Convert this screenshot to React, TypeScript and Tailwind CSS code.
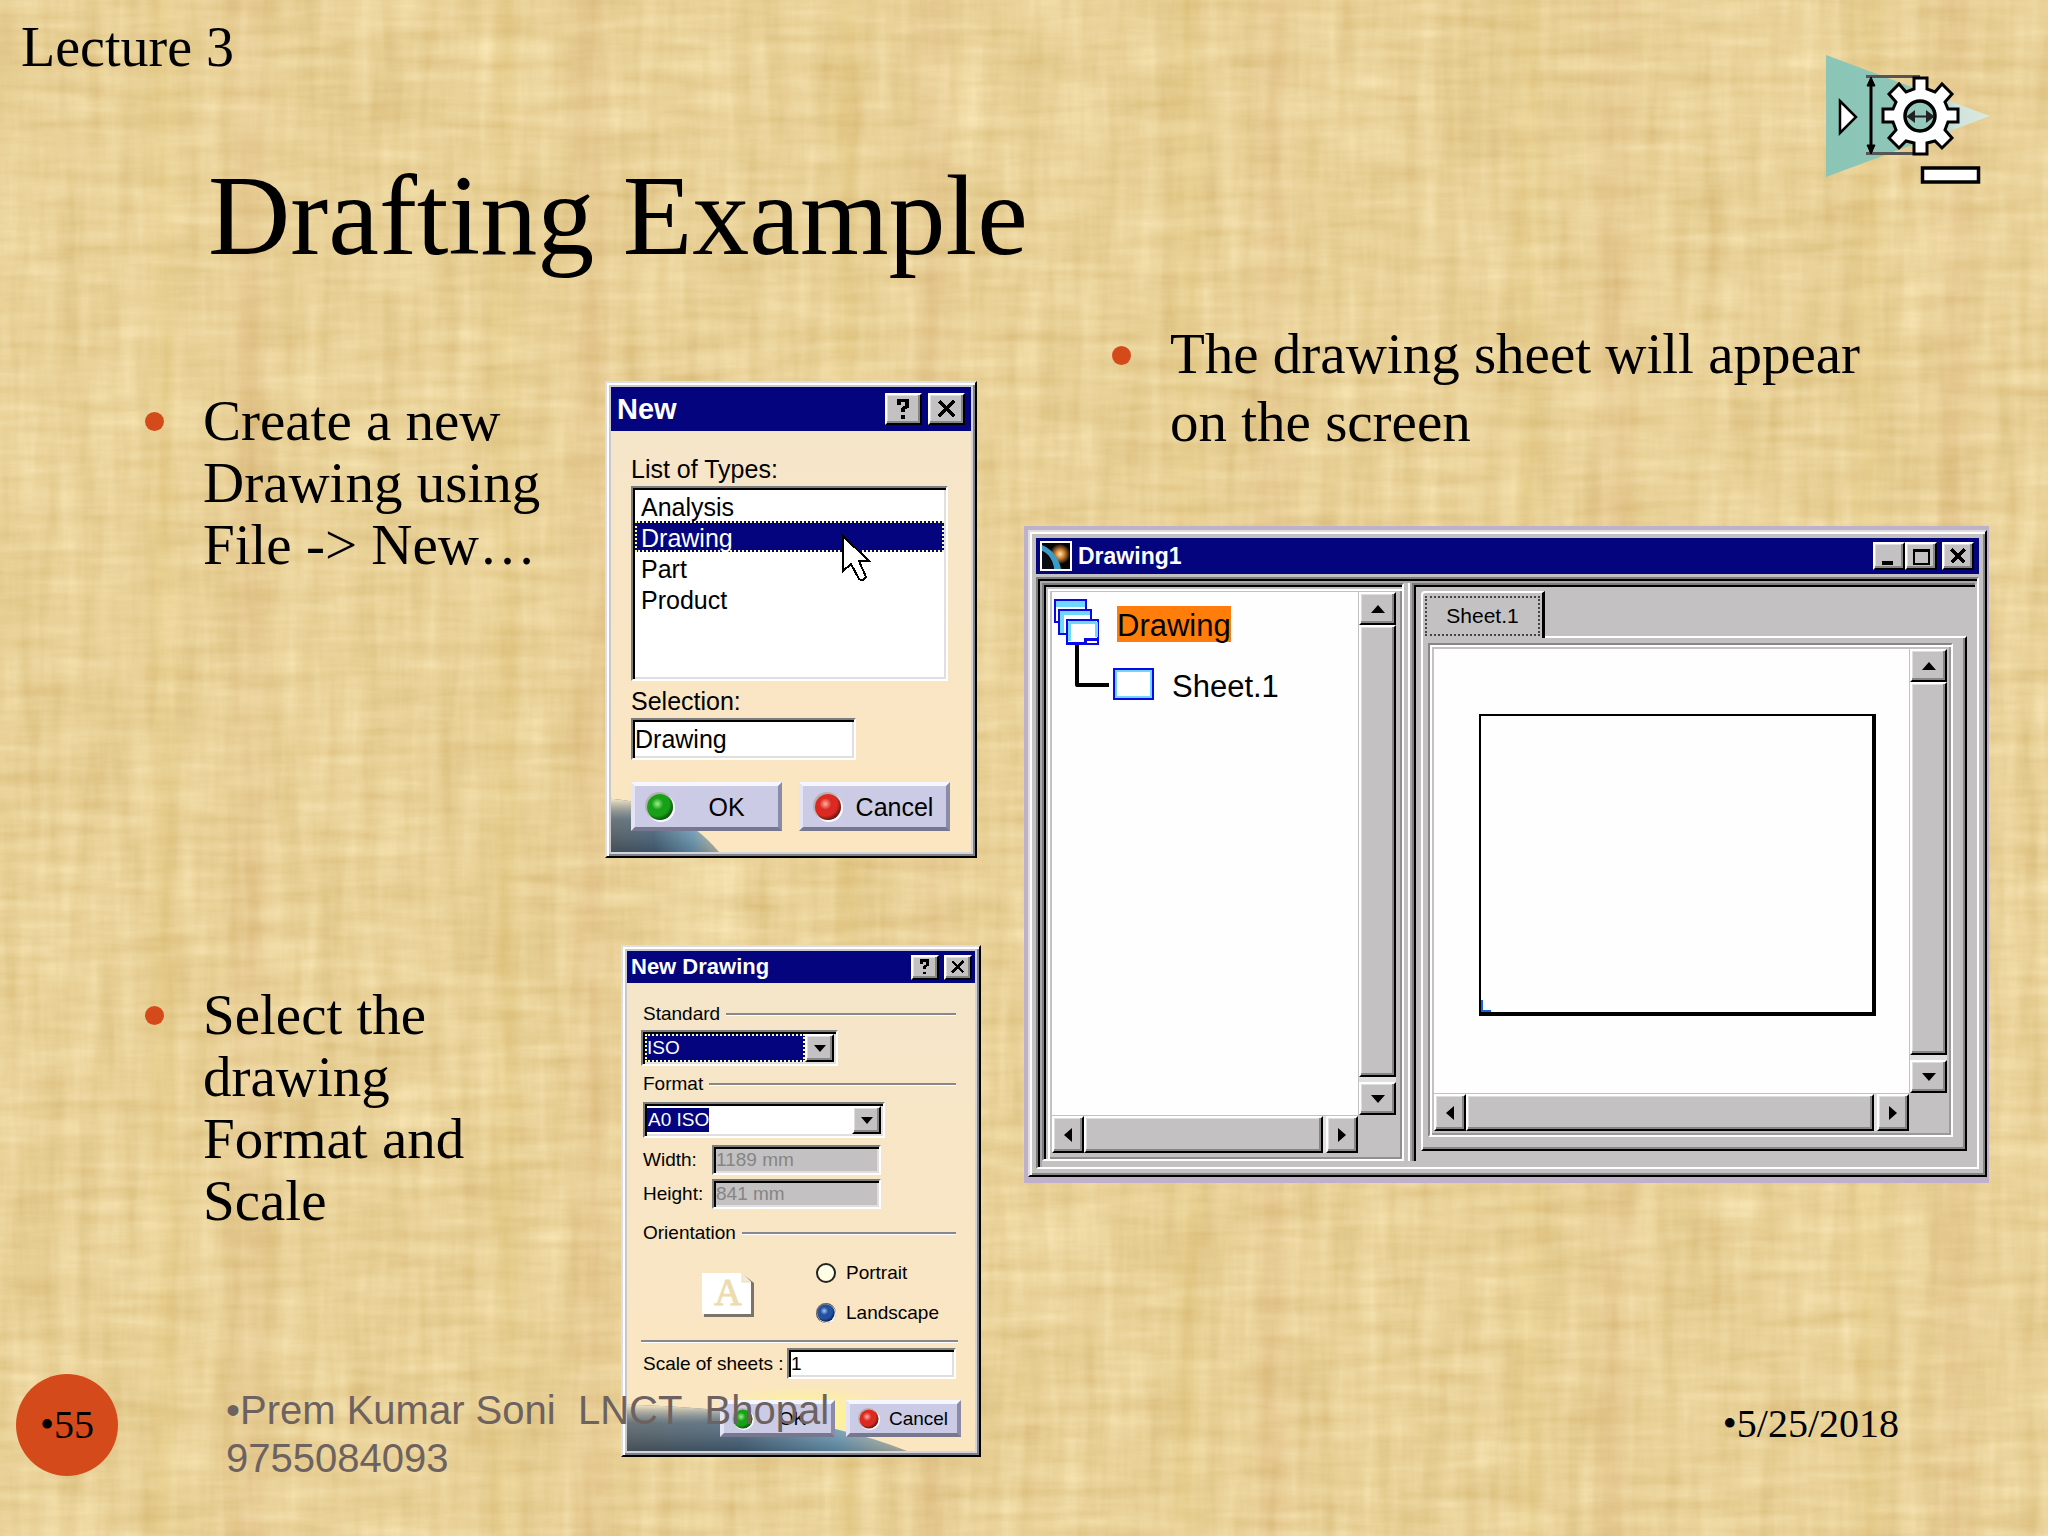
import { useState } from 'react';
import type { ReactNode } from 'react';
import clsx from 'clsx';

const serif = "font-['Liberation_Serif',serif]";
const sans = "font-['Liberation_Sans',sans-serif]";

const raised =
  'border-2 border-t-white border-l-white border-r-black border-b-black bg-[#c3c1c2] shadow-[inset_-2px_-2px_0_#868686,inset_1px_1px_0_#dedede]';
const sunken =
  'border-2 border-t-[#7d7d7d] border-l-[#7d7d7d] border-r-white border-b-white shadow-[inset_2px_2px_0_#000,inset_-2px_-2px_0_#e2dede]';
const dialogFrame =
  'relative shrink-0 border-t-2 border-l-2 border-r-2 border-b-2 border-t-[#dedee2] border-l-[#dedee2] border-r-black border-b-black shadow-[inset_2px_2px_0_#fff,inset_-2px_-2px_0_#808088,inset_4px_4px_0_#c8c8cc,inset_-4px_-4px_0_#d4d4dc] bg-[#fae6c3] bg-linear-to-b from-[#f5e5ca] to-[#fbe6c0]';

const fileTypes = ['Analysis', 'Drawing', 'Part', 'Product'];

function Papyrus() {
  return (
    <>
      <svg className="absolute inset-0 h-full w-full" aria-hidden="true">
        <filter id="papyrus" x="0" y="0" width="100%" height="100%" colorInterpolationFilters="sRGB">
          <feTurbulence type="fractalNoise" baseFrequency="0.009 0.07" numOctaves="4" seed="4" />
          <feColorMatrix values="1 0 0 0 0  1 0 0 0 0  1 0 0 0 0  0 0 0 0 1" result="weft" />
          <feTurbulence type="fractalNoise" baseFrequency="0.05 0.006" numOctaves="4" seed="9" />
          <feColorMatrix values="1 0 0 0 0  1 0 0 0 0  1 0 0 0 0  0 0 0 0 1" result="warp" />
          <feComposite in="weft" in2="warp" operator="arithmetic" k2="0.5" k3="0.5" />
          <feColorMatrix values="0.17 0 0 0 0.828  0.23 0 0 0 0.705  0.32 0 0 0 0.435  0 0 0 0 1" />
        </filter>
        <rect width="100%" height="100%" filter="url(#papyrus)" />
      </svg>
      <div className="absolute inset-0 bg-[repeating-linear-gradient(90deg,transparent_0px,transparent_140px,#d8b85a28_166px,transparent_184px,transparent_220px,#d09a6824_250px,transparent_280px,transparent_341px)]" />
    </>
  );
}

function GearLogo() {
  return (
    <svg viewBox="0 0 240 170" className="mt-[30px] mr-7 h-[170px] w-60 shrink-0" aria-hidden="true">
      <defs>
        <linearGradient id="cone" x1="0" x2="1">
          <stop offset="0" stopColor="#8ac5b6" />
          <stop offset="0.6" stopColor="#8fc7b9" />
          <stop offset="0.8" stopColor="#cfe3dc" />
          <stop offset="1" stopColor="#dde9df" />
        </linearGradient>
      </defs>
      <path d="M46 25 210 86 46 147Z" fill="url(#cone)" />
      <path d="M60 71 76 87 60 103Z" fill="#fff" stroke="#000" strokeWidth="2.500" />
      <path d="M86 46.5H140M86 123.5H140" stroke="#555" strokeWidth="3" />
      <path d="M91 50V122" stroke="#000" strokeWidth="3" />
      <path d="M91 47 95 56H87ZM91 124 95 115H87Z" stroke="#000" />
      <path
        d="M134 48H147V59L155 62L162 54L172 64L165 72L168 79H178V92H168L165 100L172 108L162 118L155 111L147 113V124H134V113L126 111L119 118L109 108L116 100L113 92H103V79H113L116 72L109 64L119 54L126 62L134 59Z"
        fill="#fff"
        stroke="#000"
        strokeWidth="3"
      />
      <circle cx="140" cy="86" r="15" fill="#94c9bb" stroke="#000" strokeWidth="3.5" />
      <path d="M128 86.500H153M134 82 128 86.500 134 91ZM147 82 153 86.500 147 91Z" stroke="#222" strokeWidth="2" fill="#222" />
      <rect x="142.500" y="138" width="56" height="14" fill="#fff" stroke="#000" strokeWidth="3.500" />
    </svg>
  );
}

function CaptionButton({ kind, className }: { kind: 'help' | 'close' | 'min' | 'max'; className: string }) {
  return (
    <button type="button" aria-label={kind} className={clsx('flex items-center justify-center', raised, className)}>
      <svg viewBox="0 0 20 20" className="h-5/6" shapeRendering="crispEdges" fill="none" stroke="#000">
        {kind === 'help' && <path d="M6 7V3H13V8L9.500 10V13M9.500 15.500V18.500" strokeWidth="3" />}
        {kind === 'close' && <path d="M3.500 3.500 16.500 16.500M16.500 3.500 3.500 16.500" strokeWidth="3" />}
        {kind === 'min' && <path d="M3 17H14" strokeWidth="4" />}
        {kind === 'max' && <path d="M3 4H18V18H3ZM3 4.500H18" strokeWidth="2.500" />}
      </svg>
    </button>
  );
}

function Orb({ color, className }: { color: 'green' | 'red' | 'blue'; className: string }) {
  const tones = {
    green: ['#9df08a', '#18a018', '#064d0c'],
    red: ['#ffb0a0', '#dc2a22', '#5c1512'],
    blue: ['#a9c8f0', '#2450a0', '#0a1c50'],
  }[color];
  const id = `orb-${color}`;
  return (
    <svg viewBox="0 0 30 30" className={className} aria-hidden="true">
      <defs>
        <radialGradient id={id} cx="0.4" cy="0.38" r="0.65">
          <stop offset="0" stopColor={tones[0]} />
          <stop offset="0.35" stopColor={tones[1]} />
          <stop offset="0.7" stopColor={tones[1]} />
          <stop offset="1" stopColor={tones[2]} />
        </radialGradient>
      </defs>
      <circle cx="16" cy="16" r="14" fill="#fff" />
      <circle cx="14" cy="14" r="14" fill="#a8a090" fillOpacity="0.6" />
      <circle cx="15" cy="15" r="13" fill={`url(#${id})`} />
    </svg>
  );
}

function PushButton({ orb, children, className, orbClass }: { orb: 'green' | 'red'; children: ReactNode; className: string; orbClass: string }) {
  return (
    <button
      type="button"
      className={clsx(
        'flex items-center border-4 border-t-[#f6f6fe] border-l-[#e4e4f4] border-r-[#8b8ba8] border-b-[#77778f] bg-[#cbcbe6]',
        className
      )}
    >
      <Orb color={orb} className={orbClass} />
      <span className="flex-1 text-center">{children}</span>
    </button>
  );
}

function Planet({ id, className, glow }: { id: string; className: string; glow: string }) {
  return (
    <svg viewBox="0 0 300 100" preserveAspectRatio="none" className={className} aria-hidden="true">
      <defs>
        <linearGradient id={id} x1="0" x2="1">
          <stop offset="0" stopColor="#5c6468" />
          <stop offset="0.4" stopColor="#4f6c84" />
          <stop offset="0.75" stopColor="#7fb6d4" />
          <stop offset="1" stopColor="#f4ecc8" />
        </linearGradient>
        <linearGradient id={`${id}-shade`} x1="0" x2="0" y1="0" y2="1">
          <stop offset="0" stopColor="#f6e6c4" stopOpacity="1" />
          <stop offset="0.4" stopColor="#8d9aa0" stopOpacity="0.3" />
          <stop offset="1" stopColor="#1e2c3a" stopOpacity="0.4" />
        </linearGradient>
        <radialGradient id={`${id}-glow`}>
          <stop offset="0" stopColor={glow} stopOpacity="0.9" />
          <stop offset="1" stopColor={glow} stopOpacity="0" />
        </radialGradient>
      </defs>
      <ellipse cx="190" cy="45" rx="110" ry="45" fill={`url(#${id}-glow)`} />
      <path d="M0 30C110 34 220 55 300 100H0Z" fill={`url(#${id})`} />
      <path d="M0 30C110 34 220 55 300 100H0Z" fill={`url(#${id}-shade)`} />
    </svg>
  );
}

function NewDialog() {
  const [selected, setSelected] = useState('Drawing');
  return (
    <section className={clsx(dialogFrame, sans, 'ml-[50px] w-[372px] p-1 text-[25px] leading-[30px]')}>
      <Planet id="planet-a" glow="#ffd988" className="absolute bottom-1 left-1 h-[76px] w-[108px]" />
      <header className="flex h-11 items-center gap-1.5 bg-[#04047f] pr-1.5 pl-1.5">
        <h2 className="flex-1 text-[29px] font-bold text-white">New</h2>
        <CaptionButton kind="help" className="h-8 w-[37px]" />
        <CaptionButton kind="close" className="h-8 w-[37px]" />
      </header>
      <div className="relative px-5 pt-[23px] pb-[21px]">
        <p id="types-label">List of Types:</p>
        <div className={clsx('mt-0.5 h-[195px] w-[317px] bg-white pt-0.5 pl-0.5', sunken)}>
          <ul role="listbox" aria-labelledby="types-label">
            {fileTypes.map((type) => (
              <li key={type} role="option" aria-selected={type === selected} className="relative">
                <button
                  type="button"
                  onClick={() => setSelected(type)}
                  className={clsx(
                    'block h-[31px] w-[309px] border-2 pl-1 text-left leading-[30px]',
                    type === selected ? 'border-dotted border-[#ffff9a] bg-[#04047f] text-white' : 'border-transparent'
                  )}
                >
                  {type}
                </button>
                {type === selected && (
                  <svg viewBox="0 0 30 48" className="absolute top-[13px] left-[206px] z-10 h-12 w-[30px]" aria-hidden="true">
                    <path
                      d="M2 2V37L10 30L18 45Q22 48 25 43L18 27H28Z"
                      fill="#fff"
                      stroke="#000"
                      strokeWidth="2"
                      shapeRendering="crispEdges"
                    />
                  </svg>
                )}
              </li>
            ))}
          </ul>
        </div>
        <label htmlFor="selection" className="mt-[5px] block">
          Selection:
        </label>
        <input id="selection" type="text" value={selected} readOnly className={clsx('mt-0.5 block h-[42px] w-[225px] bg-white pl-0.5', sunken)} />
        <div className="mt-[22px] flex gap-[17px]">
          <PushButton orb="green" className="h-[49px] w-[151px] pl-2.5" orbClass="h-[30px] w-[30px]">
            OK
          </PushButton>
          <PushButton orb="red" className="h-[49px] w-[151px] pl-2.5" orbClass="h-[30px] w-[30px]">
            Cancel
          </PushButton>
        </div>
      </div>
    </section>
  );
}

function Legend({ children }: { children: ReactNode }) {
  return (
    <div className="flex items-center gap-1.5 pr-4 pl-0.5">
      <span>{children}</span>
      <span className="h-[3px] flex-1 border-t-2 border-b border-t-[#88888c] border-b-white" />
    </div>
  );
}

function DropArrow() {
  return (
    <span className={clsx('flex h-full w-[29px] shrink-0 items-center justify-center', raised)}>
      <svg viewBox="0 0 12 8" className="h-2 w-3" aria-hidden="true">
        <path d="M0 1H12L6 8Z" />
      </svg>
    </span>
  );
}

function NewDrawingDialog() {
  const [orientation, setOrientation] = useState('Landscape');
  return (
    <section className={clsx(dialogFrame, sans, 'ml-[66px] w-[360px] p-1 text-[19px] leading-6')}>
      <Planet id="planet-b" glow="#fffa80" className="absolute bottom-1 left-1 h-[66px] w-[280px]" />
      <header className="flex h-8 items-center gap-[5px] bg-[#04047f] pr-[3px] pl-1">
        <h2 className="flex-1 text-[22px] font-bold text-white">New Drawing</h2>
        <CaptionButton kind="help" className="h-[25px] w-7" />
        <CaptionButton kind="close" className="h-[25px] w-7" />
      </header>
      <div className="relative pt-[19px] pr-[3px] pb-3.5 pl-3.5">
        <Legend>Standard</Legend>
        <div className={clsx('relative mt-1 flex h-9 w-[197px] bg-white p-0.5', sunken)}>
          <select aria-label="Standard" className="min-w-0 flex-1 appearance-none border-2 border-dotted border-[#ffff9a] bg-[#04047f] text-white">
            <option>ISO</option>
          </select>
          <DropArrow />
        </div>
        <div className="mt-1.5">
          <Legend>Format</Legend>
        </div>
        <div className={clsx('relative mt-1.5 ml-0.5 flex h-9 w-[242px] bg-white p-0.5', sunken)}>
          <span className="flex flex-1 items-center">
            <select aria-label="Format" className="h-6 w-[62px] appearance-none bg-[#04047f] pl-px text-white">
              <option>A0 ISO</option>
            </select>
          </span>
          <DropArrow />
        </div>
        <div className="mt-[7px] flex items-center pl-0.5">
          <label htmlFor="width" className="w-[69px]">
            Width:
          </label>
          <input id="width" disabled value="1189 mm" className={clsx('h-[30px] w-[169px] bg-[#c3c1c2] pl-0.5 text-[#858585]', sunken)} />
        </div>
        <div className="mt-1 flex items-center pl-0.5">
          <label htmlFor="height" className="w-[69px]">
            Height:
          </label>
          <input id="height" disabled value="841 mm" className={clsx('h-[30px] w-[169px] bg-[#c3c1c2] pl-0.5 text-[#858585]', sunken)} />
        </div>
        <div className="mt-3">
          <Legend>Orientation</Legend>
        </div>
        <div className="flex h-[95px] items-center">
          <svg viewBox="0 0 52 44" className="mt-1 ml-[61px] h-11 w-[52px]" aria-hidden="true">
            <path d="M2 2H42L52 10V44H2Z" fill="#7b7468" />
            <path d="M0 0H40L49 9V41H0Z" fill="#fff" />
            <path d="M40 0V9H49" fill="#f6ead0" stroke="#e8dcc0" />
            <text x="26" y="32" textAnchor="middle" fontFamily="Liberation Serif" fontSize="38" fill="#ecdcae" stroke="#ecdcae">
              A
            </text>
          </svg>
          <div className="ml-[62px] flex flex-col gap-4">
            {['Portrait', 'Landscape'].map((name) => (
              <label key={name} className="flex items-center gap-2.5">
                <span className="relative h-5 w-5">
                  <input
                    type="radio"
                    name="orientation"
                    checked={orientation === name}
                    onChange={() => setOrientation(name)}
                    className="block h-5 w-5 appearance-none rounded-full border-2 border-[#222] bg-[#ffffe6]"
                  />
                  {orientation === name && <Orb color="blue" className="absolute inset-0 h-5 w-5" />}
                </span>
                {name}
              </label>
            ))}
          </div>
        </div>
        <div className="mr-3.5 h-[3px] border-t-2 border-b border-t-[#88888c] border-b-white" />
        <div className="mt-[5px] flex items-center pl-0.5">
          <label htmlFor="scale" className="w-36">
            Scale of sheets :
          </label>
          <input id="scale" type="text" defaultValue="1" className={clsx('h-[31px] w-[169px] bg-white pl-0.5', sunken)} />
        </div>
        <div className="mt-[21px] flex justify-end gap-[11px] pr-[11px]">
          <PushButton orb="green" className="h-[37px] w-[115px] pl-2" orbClass="h-[22px] w-[22px]">
            OK
          </PushButton>
          <PushButton orb="red" className="h-[37px] w-[115px] pl-2" orbClass="h-[22px] w-[22px]">
            Cancel
          </PushButton>
        </div>
      </div>
    </section>
  );
}

const arrows = {
  up: 'M0 8 7 0 14 8Z',
  down: 'M0 0H14L7 8Z',
  left: 'M8 0V14L0 7Z',
  right: 'M0 0V14L8 7Z',
};

function ScrollArrow({ dir }: { dir: keyof typeof arrows }) {
  const vertical = dir === 'up' || dir === 'down';
  return (
    <button type="button" aria-label={`Scroll ${dir}`} className={clsx('flex shrink-0 items-center justify-center', raised, vertical ? 'h-[33px]' : 'w-8')}>
      <svg viewBox={vertical ? '0 0 14 8' : '0 0 8 14'} className={vertical ? 'h-2 w-3.5' : 'h-3.5 w-2'}>
        <path d={arrows[dir]} />
      </svg>
    </button>
  );
}

function ScrollPane({ children, className }: { children: ReactNode; className: string }) {
  return (
    <div className={clsx('grid grid-cols-[1fr_37px] grid-rows-[1fr_37px] gap-px bg-[#c3c1c2]', className)}>
      <div className="bg-[#fefefe]">{children}</div>
      <div className="flex flex-col">
        <ScrollArrow dir="up" />
        <div className={clsx('flex-1', raised)} />
        <div className="h-[5px] bg-[#e1e0e0]" />
        <ScrollArrow dir="down" />
      </div>
      <div className="flex">
        <ScrollArrow dir="left" />
        <div className={clsx('flex-1', raised)} />
        <div className="w-[3px] bg-[#e1e0e0]" />
        <ScrollArrow dir="right" />
      </div>
    </div>
  );
}

function SpecTree() {
  return (
    <div className="flex flex-col pt-[7px] pl-0.5 text-[31px] leading-9">
      <div className="flex items-center">
        <svg viewBox="0 0 45 46" className="h-[46px] w-[45px]" shapeRendering="crispEdges" aria-hidden="true">
          <g fill="#fff" stroke="#0808e8" strokeWidth="2">
            <rect x="1" y="1" width="31" height="22" />
            <path d="M2 5H31" stroke="#70d8ff" strokeWidth="6" />
            <rect x="5" y="11" width="32" height="24" />
            <path d="M6 14H36M8 13V34" stroke="#70d8ff" strokeWidth="4" />
            <rect x="13" y="21" width="31" height="24" />
            <path d="M15 23.500H42M15.500 23V42M42 23V38" stroke="#70d8ff" strokeWidth="3" />
            <path d="M12 44H31V40H44" strokeWidth="3" fill="none" />
          </g>
        </svg>
        <span className="mt-1 ml-[18px] bg-[#ff7e0b] pt-1 leading-8">Drawing</span>
      </div>
      <div className="flex items-start">
        <svg viewBox="0 0 36 44" className="ml-[21px] h-11 w-9" aria-hidden="true">
          <path d="M2 0V40H34" fill="none" stroke="#000" strokeWidth="4" strokeLinejoin="round" />
        </svg>
        <svg viewBox="0 0 41 32" className="mt-[23px] ml-0.5 h-8 w-[41px]" shapeRendering="crispEdges" aria-hidden="true">
          <rect x="1" y="1" width="39" height="30" fill="#fff" stroke="#0808e8" strokeWidth="2" />
          <rect x="3" y="3" width="35" height="26" fill="#fff" stroke="#70d8ff" strokeWidth="2" />
        </svg>
        <span className="mt-6 ml-[18px]">Sheet.1</span>
      </div>
    </div>
  );
}

function DrawingWindow() {
  return (
    <section className={clsx('mr-[59px] bg-[#bfb0cc] pt-1 pr-0.5 pb-1.5 pl-1', sans)}>
      <div className="border-2 border-t-[#dedede] border-l-[#dedede] border-r-black border-b-black bg-[#c3c1c2] p-1.5 shadow-[inset_2px_2px_0_#fff,inset_-2px_-2px_0_#868686]">
        <header className="flex h-9 items-center bg-[#04047f] pr-[5px] pl-1">
          <svg viewBox="0 0 32 30" className="h-[30px] w-8" aria-hidden="true">
            <defs>
              <radialGradient id="sun">
                <stop offset="0" stopColor="#ffe9b0" />
                <stop offset="0.4" stopColor="#d98a3c" />
                <stop offset="1" stopColor="#160a04" />
              </radialGradient>
            </defs>
            <rect width="32" height="30" fill="#fff" />
            <rect x="2" y="2" width="28" height="26" fill="#060606" />
            <circle cx="20" cy="13" r="10" fill="url(#sun)" />
            <path d="M2 4C12 8 19 17 21 28H14C13 19 8 12 2 10Z" fill="#3c9cc8" />
            <path d="M2 10C8 12 13 19 14 28H2Z" fill="#0a0a12" />
          </svg>
          <h2 className="ml-1.5 flex-1 text-[23px] leading-7 font-bold text-white">Drawing1</h2>
          <CaptionButton kind="min" className="h-7 w-8" />
          <CaptionButton kind="max" className="h-7 w-8" />
          <CaptionButton kind="close" className="ml-[5px] h-7 w-8" />
        </header>
        <div className="mt-[3px] flex border-2 border-t-[#7d7d7d] border-l-[#7d7d7d] border-r-white border-b-white pt-1 pr-0.5 pb-1.5 pl-1 shadow-[inset_2px_2px_0_#000,inset_4px_4px_0_#a8a8ac]">
          <div className="w-[362px] shrink-0 border-2 border-t-[#7d7d7d] border-l-[#7d7d7d] border-r-white border-b-white pt-[7px] pr-1.5 pb-1.5 pl-2 shadow-[inset_2px_2px_0_#000,inset_4px_4px_0_#c3c1c2,inset_6px_6px_0_#fff,inset_-2px_-2px_0_#8f8f8f]">
            <ScrollPane className="h-full min-h-[561px]">
              <SpecTree />
            </ScrollPane>
          </div>
          <div className="ml-1 w-1 border-r-2 border-l-2 border-l-white border-r-[#a8a8a8]" />
          <div className="flex flex-1 flex-col border-t-2 border-l-2 border-t-[#7d7d7d] border-l-[#7d7d7d] pt-1.5 pr-2 pb-2.5 pl-[7px] shadow-[inset_2px_2px_0_#000]">
            <button
              type="button"
              className="relative z-10 h-[47px] w-[124px] rounded-tl border-t-2 border-r-3 border-l-2 border-t-white border-l-white border-r-black bg-[#c3c1c2] p-0.5 text-[21px] leading-6"
            >
              <span className="flex h-10 items-center justify-center border-2 border-dotted border-[#444]">Sheet.1</span>
            </button>
            <div className="-mt-0.5 flex flex-1 flex-col border-2 border-t-white border-l-white border-r-black border-b-black pt-[5px] pr-3 pb-3 pl-[5px] shadow-[inset_-2px_-2px_0_#868686]">
              <div className="flex flex-1 flex-col border-2 border-t-[#868686] border-l-[#868686] border-r-white border-b-white p-1 shadow-[inset_2px_2px_0_#fff,inset_-2px_-2px_0_#9a9a9a]">
                <ScrollPane className="flex-1">
                  <div className="h-full px-[33px] pt-[65px] pb-[77px] pl-[45px]">
                    <div className="relative h-full border-2 border-r-4 border-b-4 border-black">
                      <span className="absolute bottom-0 left-0 h-3 w-2.5 border-b-2 border-l-2 border-[#1a66d8]" />
                    </div>
                  </div>
                </ScrollPane>
              </div>
            </div>
          </div>
        </div>
      </div>
    </section>
  );
}

function Bullet({ className }: { className: string }) {
  return <span className={clsx('h-[19px] w-[19px] shrink-0 rounded-full bg-[#d54a1a]', className)} />;
}

export default function App() {
  return (
    <main className={clsx('relative flex min-h-screen flex-col overflow-hidden bg-[#e8d195] text-black', serif)}>
      <Papyrus />

      <header className="relative flex h-[278px] items-start justify-between">
        <div>
          <p className="pt-[15px] pl-[21px] text-[56px] leading-[64px]">Lecture 3</p>
          <h1 className="mt-[73px] pl-[208px] text-[114px] leading-[128px]">Drafting Example</h1>
        </div>
        <GearLogo />
      </header>

      <div className="relative grid flex-1 grid-cols-2 items-start">
        <ul className="flex flex-col gap-[87px] pt-[103px] pl-[145px] text-[57px] leading-[62px]">
          <li className="flex items-start">
            <Bullet className="mt-[31px]" />
            <p className="mt-[9px] ml-[39px] w-[352px] shrink-0">Create a new Drawing using File -&gt; New…</p>
            <NewDialog />
          </li>
          <li className="flex items-start">
            <Bullet className="mt-[61px]" />
            <p className="mt-[39px] ml-[39px] w-[352px] shrink-0">Select the drawing Format and Scale</p>
            <NewDrawingDialog />
          </li>
        </ul>

        <div className="pt-[42px]">
          <div className="flex items-start pl-[88px] text-[57px] leading-[68px]">
            <Bullet className="mt-[26px]" />
            <p className="ml-[39px] max-w-[740px]">The drawing sheet will appear on the screen</p>
          </div>
          <div className="mt-[70px]">
            <DrawingWindow />
          </div>
        </div>
      </div>

      <footer className="absolute inset-x-0 bottom-[54px] flex items-start pr-[149px] pl-4 text-[40px] leading-[48px]">
        <span className="flex h-[102px] w-[102px] items-center justify-center rounded-full bg-[#d54a1a]">•55</span>
        <p className={clsx('mt-3 ml-[108px] flex-1 text-[#6d6260]', sans)}>
          •Prem Kumar Soni&nbsp; LNCT&nbsp; Bhopal
          <br />
          9755084093
        </p>
        <time dateTime="2018-05-25" className="mt-[26px]">
          •5/25/2018
        </time>
      </footer>
    </main>
  );
}
